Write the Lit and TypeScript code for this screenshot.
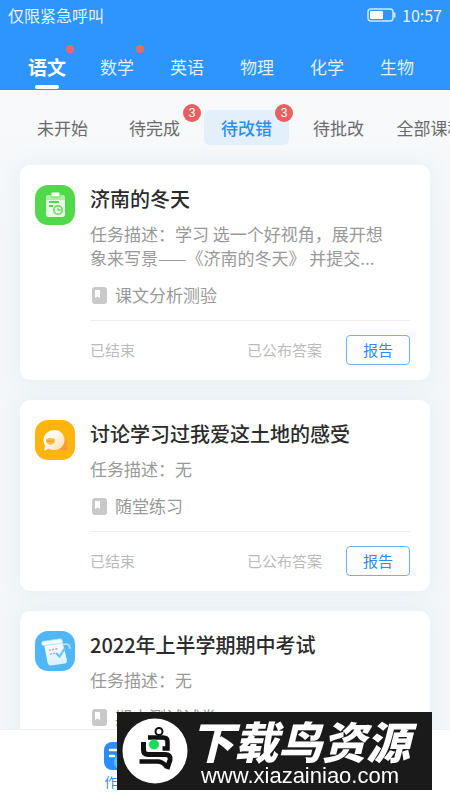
import { LitElement, html, css, svg, nothing } from "lit";
import { customElement, property } from "lit/decorators.js";

type Kind = "homework" | "discussion" | "exam";

interface Task {
  kind: Kind;
  title: string;
  description: string;
  category: string;
}

const SUBJECTS = [
  { name: "语文", active: true, dot: true },
  { name: "数学", active: false, dot: true },
  { name: "英语", active: false, dot: false },
  { name: "物理", active: false, dot: false },
  { name: "化学", active: false, dot: false },
  { name: "生物", active: false, dot: false },
];

const FILTERS = [
  { name: "未开始", active: false, count: 0 },
  { name: "待完成", active: false, count: 3 },
  { name: "待改错", active: true, count: 3 },
  { name: "待批改", active: false, count: 0 },
  { name: "全部课程", active: false, count: 0 },
];

const TASKS: Task[] = [
  {
    kind: "homework",
    title: "济南的冬天",
    description: "学习 选一个好视角，展开想象来写景——《济南的冬天》 并提交...",
    category: "课文分析测验",
  },
  { kind: "discussion", title: "讨论学习过我爱这土地的感受", description: "无", category: "随堂练习" },
  { kind: "exam", title: "2022年上半学期期中考试", description: "无", category: "期中测试试卷" },
];

const KIND_ART = {
  homework: svg`
    <rect width="40" height="40" rx="13" fill="#52d84b" />
    <rect x="11" y="10" width="19" height="22" rx="3" fill="#e9fde6" />
    <path d="M11 13a3 3 0 0 1 3-3h13a3 3 0 0 1 3 3v2H11z" fill="#a9f0a2" />
    <rect x="16" y="7" width="9" height="5" rx="1.5" fill="#f4fff2" stroke="#52d84b" stroke-width=".8" />
    <path d="M14 17h10M14 21h4" stroke="#52d84b" stroke-width="1.8" />
    <circle cx="23" cy="25" r="4.2" fill="#e9fde6" stroke="#6bdd64" stroke-width="1.7" />
    <path d="M23 22.500v2.500h3" fill="none" stroke="#6bdd64" stroke-width="1.3" />`,
  discussion: svg`
    <defs>
      <linearGradient id="bubble" x1="0" y1="0" x2="1" y2="1">
        <stop offset=".3" stop-color="#fffdf5" />
        <stop offset="1" stop-color="#ffdba6" />
      </linearGradient>
    </defs>
    <rect width="40" height="40" rx="13" fill="#fdb40d" />
    <path d="M27 18c4 1 6 3 5 6l1 6H22z" fill="#ff9a38" />
    <path d="M19.500 10c6 0 10 4.500 10 10s-4 10-10 10c-2 0-4-.5-5.500-1.500L9 31l1-5.500c-1-1.500-1.500-3.500-1.500-5.500 0-5.500 5-10 11-10z" fill="url(#bubble)" />
    <path d="M11 19c3-1.500 6-1.500 9 0v2c-1 5-8 5-9 0z" fill="#f9bd49" />
    <path d="M12.500 21.200h6" stroke="#e89a25" stroke-width="1" />`,
  exam: svg`
    <defs>
      <linearGradient id="sheet" x1="0" y1="0" x2="0" y2="1">
        <stop offset="0" stop-color="#ffffff" />
        <stop offset="1" stop-color="#d5f0ff" />
      </linearGradient>
    </defs>
    <rect width="40" height="40" rx="13" fill="#50b7f7" />
    <path d="M9 13l18-3.500 5 20c0 2-1 3-2 3l-14 2c-2 0-3-1-3.500-3z" fill="url(#sheet)" />
    <rect x="6.500" y="9" width="21" height="4.500" rx="2.200" transform="rotate(-8 17 11)" fill="#f3fbff" stroke="#a6d8f7" stroke-width=".7" />
    <path d="M27 14c5-2 8-.5 8 4" fill="none" stroke="#b5e6ff" stroke-width="1.600" />
    <path d="M14 19.200l9-1.500M15 23l5-.8" stroke="#bd9ee8" stroke-width="1.500" stroke-dasharray="2 1.200" />
    <path d="M21 22l3.500 3.500L30 17" fill="none" stroke="#6cc4f5" stroke-width="2.200" />`,
};

const CJK = css`"Noto Sans CJK SC", "Noto Sans", sans-serif`;

@customElement("task-card")
export class TaskCard extends LitElement {
  @property({ attribute: false }) task!: Task;

  static styles = css`
    :host {
      display: block;
    }
    .card {
      display: flex;
      gap: 15px;
      padding: 20px 20px 15px 15px;
      border-radius: 10px;
      background: #fff;
      box-shadow: 0 0 20px rgba(110, 150, 175, 0.1);
    }
    .art {
      flex: none;
      width: 40px;
      height: 40px;
    }
    .body {
      flex: 1;
      min-width: 0;
    }
    .title {
      margin: 0;
      font-size: 20px;
      font-weight: 500;
      line-height: 28px;
      color: #2b2b2b;
    }
    .description {
      margin: 9px 0 0;
      padding-right: 16px;
      font-size: 17px;
      line-height: 24px;
      color: #999;
    }
    .category {
      display: flex;
      align-items: center;
      gap: 8px;
      margin: 13px 0;
      padding-left: 2px;
      font-size: 17px;
      line-height: 24px;
      color: #999;
    }
    .footer {
      display: flex;
      align-items: center;
      padding-top: 14px;
      border-top: 1px solid #efefef;
      font-size: 15px;
      line-height: 20px;
      color: #bbb;
    }
    .answer {
      margin: 0 24px 0 auto;
    }
    .report {
      box-sizing: border-box;
      width: 64px;
      height: 30px;
      padding: 0;
      border: 1px solid #6fb1f5;
      border-radius: 4px;
      background: #fff;
      font: inherit;
      color: #2f8be8;
    }
  `;

  render() {
    const t = this.task;
    return html`
      <article class="card">
        <svg class="art" viewBox="0 0 40 40" aria-hidden="true">${KIND_ART[t.kind]}</svg>
        <div class="body">
          <h2 class="title">${t.title}</h2>
          <p class="description">任务描述：${t.description}</p>
          <div class="category">
            <svg width="15" height="17" viewBox="0 0 15 17" aria-hidden="true">
              <rect width="15" height="17" rx="3" fill="#c9c9c9" />
              <path d="M3 3h5v8L5.500 9.500 3 11z" fill="#fff" />
            </svg>
            <span>${t.category}</span>
          </div>
          <div class="footer">
            <span>已结束</span>
            <span class="answer">已公布答案</span>
            <button class="report" type="button">报告</button>
          </div>
        </div>
      </article>
    `;
  }
}

@customElement("app-root")
export class AppRoot extends LitElement {
  static styles = css`
    :host {
      display: flex;
      flex-direction: column;
      height: 100vh;
      overflow: hidden;
      background: linear-gradient(#f8f9fb 90px, #f3f7f9 240px);
      font-family: ${CJK};
    }
    button {
      padding: 0;
      border: 0;
      background: none;
      font: inherit;
      color: inherit;
    }
    .header {
      flex: none;
      background: #2e95ff;
      color: #fff;
    }
    .status {
      display: flex;
      align-items: center;
      justify-content: space-between;
      padding: 3px 8px 0;
      font-size: 16px;
      line-height: 24px;
      color: #e4f2ff;
    }
    .power {
      display: flex;
      align-items: center;
      gap: 6px;
    }
    .subjects {
      display: flex;
      padding: 17px 18px 0 12px;
    }
    .subject {
      position: relative;
      flex: 1;
      height: 46px;
      font-size: 17px;
      line-height: 44px;
      color: #dff0ff;
    }
    .subject.active {
      font-size: 19px;
      font-weight: 700;
      color: #fff;
    }
    .subject.active::after {
      content: "";
      position: absolute;
      left: 50%;
      bottom: 1px;
      width: 24px;
      height: 4px;
      margin-left: -12px;
      border-radius: 2px;
      background: #fff;
    }
    .dot {
      position: absolute;
      top: 1px;
      right: 8px;
      width: 8px;
      height: 8px;
      border-radius: 50%;
      background: #e8696b;
    }
    .filters {
      flex: none;
      display: flex;
      gap: 7px;
      padding: 20px 0 20px 20px;
      overflow: hidden;
    }
    .list {
      scrollbar-width: none;
    }
    .filter {
      position: relative;
      flex: none;
      width: 85px;
      height: 35px;
      border-radius: 6px;
      font-size: 17px;
      line-height: 35px;
      color: #6a6a6a;
    }
    .filter.active {
      background: #e3effb;
      font-weight: 500;
      color: #2e8ff0;
    }
    .badge {
      position: absolute;
      top: -6px;
      right: -4px;
      width: 18px;
      height: 18px;
      border-radius: 50%;
      background: #e8605f;
      font-family: "Liberation Sans", sans-serif;
      font-size: 12px;
      font-weight: 400;
      line-height: 18px;
      text-align: center;
      color: #fff;
    }
    .list {
      flex: 1;
      min-height: 0;
      display: flex;
      flex-direction: column;
      gap: 20px;
      padding: 20px;
      margin-top: -20px;
      overflow: auto;
    }
    .nav {
      flex: none;
      display: grid;
      grid-template-columns: 1fr 1fr;
      padding: 12px 10px 8px;
      border-top: 1px solid #eef1f3;
      background: #fff;
    }
    .nav-item {
      display: flex;
      flex-direction: column;
      align-items: center;
      gap: 2px;
      font-size: 13px;
      line-height: 20px;
      text-decoration: none;
      color: #2e8ff0;
    }
    .promo {
      position: fixed;
      right: 18px;
      bottom: 10px;
      display: flex;
      align-items: center;
      gap: 2px;
      box-sizing: border-box;
      height: 78px;
      padding: 0 22px 0 5px;
      background: #1a1a1a;
      color: #fff;
    }
    .promo-text {
      display: flex;
      flex-direction: column;
      align-items: center;
      padding-top: 2px;
    }
    .promo-name {
      font-size: 44px;
      font-style: italic;
      font-weight: 900;
      line-height: 48px;
      white-space: nowrap;
    }
    .promo-url {
      font-family: "Liberation Sans", Arial, sans-serif;
      font-size: 22px;
      line-height: 24px;
    }
  `;

  render() {
    return html`
      <header class="header">
        <div class="status">
          <span>仅限紧急呼叫</span>
          <span class="power">
            <svg width="29" height="14" viewBox="0 0 29 14" aria-hidden="true">
              <rect x="1" y="1" width="25" height="12" rx="3" fill="none" stroke="#cfe8ff" stroke-width="1.500" />
              <rect x="3" y="3" width="13" height="8" rx="1" fill="#fff" />
              <path d="M27.500 4.500v5" stroke="#cfe8ff" stroke-width="2" />
            </svg>
            <span>10:57</span>
          </span>
        </div>
        <nav class="subjects">
          ${SUBJECTS.map(
            (s) => html`<button type="button" class="subject ${s.active ? "active" : ""}">
              ${s.name}${s.dot ? html`<span class="dot"></span>` : nothing}
            </button>`
          )}
        </nav>
      </header>
      <div class="filters">
        ${FILTERS.map(
          (f) => html`<button type="button" class="filter ${f.active ? "active" : ""}">
            ${f.name}${f.count ? html`<span class="badge">${f.count}</span>` : nothing}
          </button>`
        )}
      </div>
      <main class="list">${TASKS.map((t) => html`<task-card .task=${t}></task-card>`)}</main>
      <nav class="nav">
        <a class="nav-item" href="#homework">
          <svg width="28" height="28" viewBox="0 0 28 28" aria-hidden="true">
            <rect width="28" height="28" rx="8" fill="#2b8df5" />
            <path d="M6 8h8M6 14h4" stroke="#fff" stroke-width="2.500" stroke-linecap="round" />
            <circle cx="18" cy="20" r="8" fill="#4cc6ff" />
          </svg>
          <span>作业</span>
        </a>
      </nav>
      <aside class="promo">
        <svg width="66" height="66" viewBox="0 0 66 66" aria-hidden="true">
          <circle cx="33" cy="33" r="32.500" fill="#fff" />
          <circle cx="37" cy="13.500" r="3.500" fill="none" stroke="#111" stroke-width="2" />
          <path d="M26 19.500h15q4.500 0 4.500 4v7h-5" fill="none" stroke="#111" stroke-width="4.500" />
          <path d="M21.500 24v8q0 4.500 4.500 4.500h17q6 0 5 5.500l-3 9" fill="none" stroke="#111" stroke-width="5" />
          <path d="M17.500 43.500h18q5 0 9 5" fill="none" stroke="#111" stroke-width="4.500" />
          <circle cx="32" cy="26.500" r="5" fill="#1edb57" />
        </svg>
        <div class="promo-text">
          <span class="promo-name">下载鸟资源</span>
          <span class="promo-url">www.xiazainiao.com</span>
        </div>
      </aside>
    `;
  }
}
